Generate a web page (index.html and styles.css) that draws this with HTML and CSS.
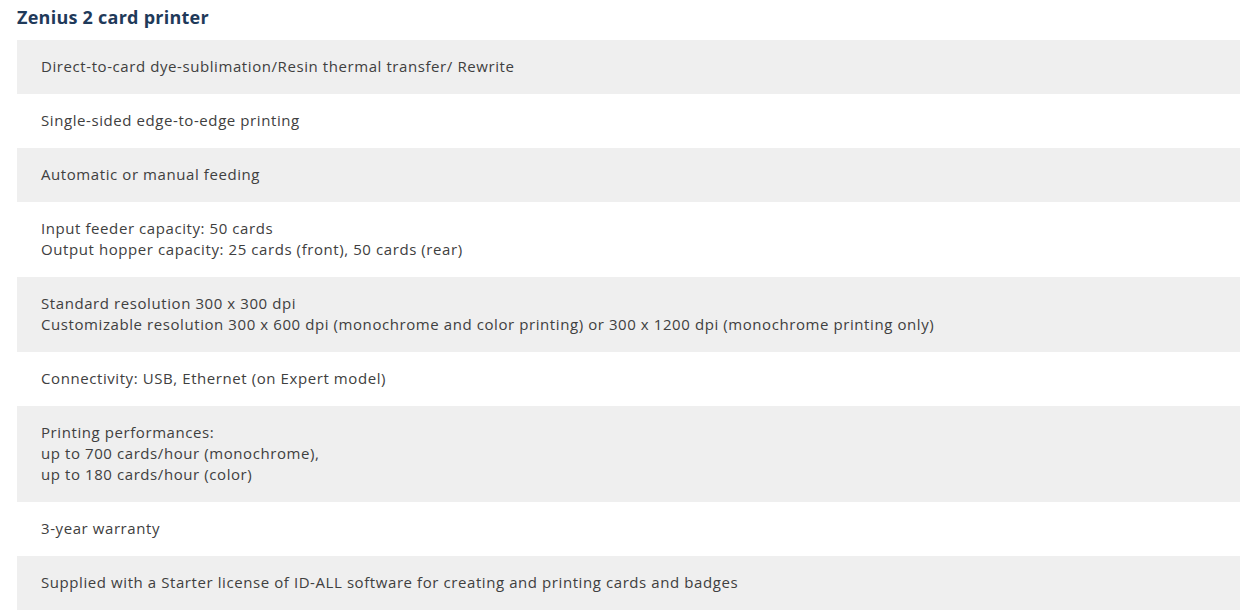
FILE: index.html
```html
<!DOCTYPE html>
<html>
<head>
<meta charset="utf-8">
<link rel="stylesheet" href="styles.css">
</head>
<body>
<div class="spec">
  <h2 class="spec-title">Zenius 2 card printer</h2>
  <ul class="spec-list">
    <li class="spec-row">Direct-to-card dye-sublimation/Resin thermal transfer/ Rewrite</li>
    <li class="spec-row">Single-sided edge-to-edge printing</li>
    <li class="spec-row">Automatic or manual feeding</li>
    <li class="spec-row">Input feeder capacity: 50 cards<br>Output hopper capacity: 25 cards (front), 50 cards (rear)</li>
    <li class="spec-row">Standard resolution 300 x 300 dpi<br>Customizable resolution 300 x 600 dpi (monochrome and color printing) or 300 x 1200 dpi (monochrome printing only)</li>
    <li class="spec-row">Connectivity: USB, Ethernet (on Expert model)</li>
    <li class="spec-row">Printing performances:<br>up to 700 cards/hour (monochrome),<br>up to 180 cards/hour (color)</li>
    <li class="spec-row">3-year warranty</li>
    <li class="spec-row">Supplied with a Starter license of ID-ALL software for creating and printing cards and badges</li>
  </ul>
</div>
</body>
</html>
```

FILE: styles.css
```css
html, body {
  margin: 0;
  padding: 0;
  background: #ffffff;
}
body {
  font-family: "Open Sans", "Liberation Sans", sans-serif;
}
.spec {
  padding: 6px 10px 0 17px;
}
.spec-title {
  margin: 0 0 12px 0;
  font-size: 18px;
  line-height: 22px;
  font-weight: 700;
  letter-spacing: 0.25px;
  color: #1f3a5a;
}
.spec-list {
  list-style: none;
  margin: 0;
  padding: 0;
}
.spec-row {
  padding: 16px 24px 17px 24px;
  font-size: 15px;
  line-height: 21px;
  letter-spacing: 0.58px;
  color: #404040;
}
.spec-row:nth-child(odd) {
  background: #efefef;
}
```
